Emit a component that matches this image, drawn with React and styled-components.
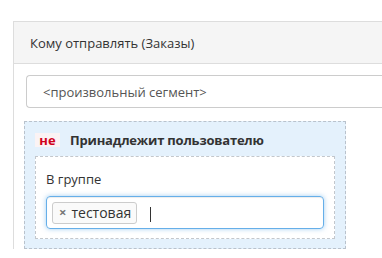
import React from "react";
import styled, { createGlobalStyle } from "styled-components";

const GlobalStyle = createGlobalStyle`
  body {
    margin: 0;
    background: #ffffff;
    font-family: "Open Sans", "Noto Sans", sans-serif;
    overflow: hidden;
  }
`;

const Page = styled.div`
  width: 382px;
  height: 258px;
  overflow: hidden;
  padding: 21px 0 0 13px;
  box-sizing: border-box;
`;

const Panel = styled.div`
  width: 420px;
  border: 1px solid #dddddd;
  border-bottom: none;
  background: #ffffff;
`;

const PanelHeader = styled.div`
  height: 41px;
  display: flex;
  align-items: center;
  padding: 0 16px;
  background: #f5f5f5;
  border-bottom: 1px solid #dddddd;
  font-size: 13px;
  color: #333333;
`;

const PanelBody = styled.div`
  padding: 11px 0 0 10px;
  display: flex;
  flex-direction: column;
`;

const Select = styled.div`
  margin-left: 2px;
  height: 33px;
  display: flex;
  align-items: center;
  padding-left: 16px;
  border: 1px solid #cccccc;
  border-right: none;
  border-radius: 4px 0 0 4px;
  font-size: 13px;
  color: #555555;
  box-sizing: border-box;
`;

const Condition = styled.div`
  margin-top: 13px;
  width: 322px;
  height: 128px;
  box-sizing: border-box;
  border: 1px dashed #b9c2cc;
  background: #e4f1fc;
  padding: 11px 10px 10px 10px;
  display: flex;
  flex-direction: column;
`;

const ConditionTitle = styled.div`
  display: flex;
  align-items: center;
  gap: 10px;
  height: 14px;
`;

const Negate = styled.span`
  display: inline-flex;
  align-items: center;
  justify-content: center;
  width: 25px;
  height: 14px;
  background: #fbf3f4;
  color: #d0021b;
  font-weight: 700;
  font-size: 13px;
  line-height: 14px;
`;

const TitleText = styled.span`
  font-weight: 700;
  font-size: 13px;
  letter-spacing: -0.2px;
  color: #333333;
`;

const Inner = styled.div`
  margin-top: 9px;
  flex: 1;
  box-sizing: border-box;
  border: 1px dashed #c3c7cc;
  background: #ffffff;
  padding: 12px 10px 9px 10px;
  display: flex;
  flex-direction: column;
`;

const Label = styled.div`
  font-size: 13px;
  color: #333333;
  line-height: 20px;
  margin-bottom: 7px;
`;

const TagInput = styled.div`
  height: 33px;
  box-sizing: border-box;
  border: 1px solid #66afe9;
  border-radius: 4px;
  box-shadow: inset 0 1px 1px rgba(0, 0, 0, 0.075),
    0 0 5px rgba(102, 175, 233, 0.6);
  display: flex;
  align-items: center;
  padding-left: 5px;
  gap: 13px;
`;

const Tag = styled.span`
  display: inline-flex;
  align-items: center;
  height: 22px;
  box-sizing: border-box;
  padding: 0 5px 0 6px;
  border: 1px solid #cccccc;
  border-radius: 3px;
  background: #fafafa;
  font-size: 14px;
  color: #333333;
  gap: 5px;
`;

const Remove = styled.span`
  font-size: 13px;
  font-weight: 700;
  color: #777777;
  line-height: 1;
`;

const Caret = styled.span`
  width: 1px;
  height: 15px;
  background: #333333;
  margin-top: 4px;
`;

export default function App() {
  return (
    <>
      <GlobalStyle />
      <Page>
        <Panel>
          <PanelHeader>Кому отправлять (Заказы)</PanelHeader>
          <PanelBody>
            <Select>&lt;произвольный сегмент&gt;</Select>
            <Condition>
              <ConditionTitle>
                <Negate>не</Negate>
                <TitleText>Принадлежит пользователю</TitleText>
              </ConditionTitle>
              <Inner>
                <Label>В группе</Label>
                <TagInput>
                  <Tag>
                    <Remove>×</Remove>
                    тестовая
                  </Tag>
                  <Caret />
                </TagInput>
              </Inner>
            </Condition>
          </PanelBody>
        </Panel>
      </Page>
    </>
  );
}
